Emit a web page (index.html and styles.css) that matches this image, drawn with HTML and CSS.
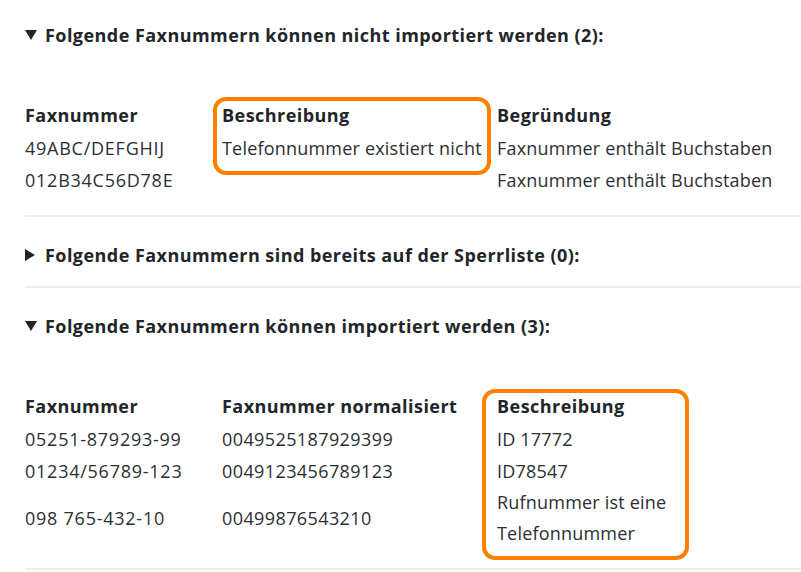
FILE: index.html
```html
<!DOCTYPE html>
<html lang="de">
<head>
<meta charset="utf-8">
<link rel="stylesheet" href="styles.css">
</head>
<body>
<div class="page">
  <details class="section" open>
    <summary class="summary">Folgende Faxnummern können nicht importiert werden (2):</summary>
    <div class="table-wrap">
      <table class="data t1">
        <thead>
          <tr><th class="c1">Faxnummer</th><th class="c2">Beschreibung</th><th class="c3">Begründung</th></tr>
        </thead>
        <tbody>
          <tr><td class="num">49ABC/DEFGHIJ</td><td>Telefonnummer existiert nicht</td><td>Faxnummer enthält Buchstaben</td></tr>
          <tr><td class="num">012B34C56D78E</td><td></td><td>Faxnummer enthält Buchstaben</td></tr>
        </tbody>
      </table>
      <div class="mark mark1"></div>
    </div>
  </details>
  <details class="section">
    <summary class="summary">Folgende Faxnummern sind bereits auf der Sperrliste (0):</summary>
  </details>
  <details class="section" open>
    <summary class="summary">Folgende Faxnummern können importiert werden (3):</summary>
    <div class="table-wrap">
      <table class="data t2">
        <thead>
          <tr><th class="c1">Faxnummer</th><th class="c2">Faxnummer normalisiert</th><th class="c3n">Beschreibung</th></tr>
        </thead>
        <tbody>
          <tr><td class="num">05251-879293-99</td><td class="num2">0049525187929399</td><td>ID 17772</td></tr>
          <tr><td class="num">01234/56789-123</td><td class="num2">0049123456789123</td><td>ID78547</td></tr>
          <tr><td class="num">098 765-432-10</td><td class="num2">00499876543210</td><td>Rufnummer ist eine Telefonnummer</td></tr>
        </tbody>
      </table>
      <div class="mark mark2"></div>
    </div>
  </details>
</div>
</body>
</html>
```
FILE: styles.css
```css
html, body {
  margin: 0;
  padding: 0;
  background: #ffffff;
}
body {
  font-family: "Open Sans", "Noto Sans", sans-serif;
  color: #212529;
}
.page {
  padding-left: 25px;
}
.section {
  border-bottom: 2px solid #eeeeee;
  padding: 26px 0 19px 0;
}
.section:first-child {
  padding-top: 23px;
}
.summary {
  list-style: none;
  display: flex;
  align-items: center;
  gap: 8px;
  font-size: 18px;
  font-weight: 700;
  letter-spacing: 0.45px;
  line-height: 24px;
  cursor: pointer;
}
.summary::-webkit-details-marker {
  display: none;
}
.summary::before {
  content: "";
  width: 0;
  height: 0;
  border-left: 6px solid transparent;
  border-right: 6px solid transparent;
  border-top: 10px solid #212529;
}
.section:not([open]) .summary::before {
  border-top: 6px solid transparent;
  border-bottom: 6px solid transparent;
  border-left: 10px solid #212529;
  border-right: 2px solid transparent;
}
.table-wrap {
  position: relative;
  margin-top: 52px;
  width: max-content;
}
.data {
  border-collapse: collapse;
  font-size: 18px;
  letter-spacing: 0.2px;
}
.data th {
  text-align: left;
  font-weight: 700;
  letter-spacing: 0.45px;
  padding: 0;
  height: 33px;
  line-height: 31px;
  vertical-align: middle;
}
.data td {
  padding: 0;
  height: 32px;
  line-height: 31px;
  color: #2b2f33;
  vertical-align: middle;
}
.data td.num {
  letter-spacing: 0.75px;
}
.data td.num2 {
  letter-spacing: 0.4px;
}
.c1 { width: 197px; }
.c2 { width: 275px; }
.c3n { width: 190px; }
.mark {
  position: absolute;
  border: 4px solid #ff8000;
  border-radius: 13px;
  box-sizing: border-box;
  pointer-events: none;
}
.mark1 {
  left: 188px;
  top: -2px;
  width: 278px;
  height: 78px;
}
.mark2 {
  left: 457px;
  top: -1px;
  width: 207px;
  height: 171px;
}
```
